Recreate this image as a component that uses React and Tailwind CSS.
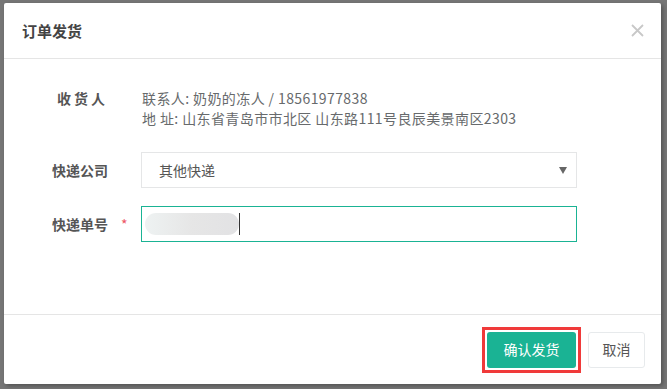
import React from 'react';

const font = { fontFamily: '"Noto Sans CJK SC", "Noto Sans", sans-serif' };

function FormRow({ label, required, children, className = '' }) {
  return (
    <div className={`flex items-center ${className}`}>
      <div className="w-[104px] text-right text-[14px] font-bold text-[#555]">{label}</div>
      <div className="w-[33px] pl-[13px] text-[14px] text-[#ed5565]">{required ? '*' : ''}</div>
      {children}
    </div>
  );
}

export default function App() {
  return (
    <div className="w-[667px] h-[389px] bg-[#767676] pt-[3px] pl-[4px] overflow-hidden" style={font}>
      <div className="w-[657px] h-[381px] bg-white rounded-[2px] flex flex-col shadow-[2px_2px_4px_rgba(0,0,0,0.3)]">
        {/* Header */}
        <div className="h-[56px] border-b border-[#e5e5e5] pl-[18px] pr-[17px] flex items-center justify-between">
          <h4 className="text-[15px] font-bold text-[#444] leading-none">订单发货</h4>
          <svg width="13" height="13" viewBox="0 0 13 13">
            <path d="M1 1 L12 12 M12 1 L1 12" stroke="#c8c8c8" strokeWidth="1.8" />
          </svg>
        </div>

        {/* Body */}
        <div className="flex-1 pt-[29px]">
          <div className="flex">
            <div className="w-[104px] text-right text-[14px] font-bold text-[#555] leading-[20px] tracking-[3px]">收货人</div>
            <div className="pl-[34px] text-[14px] text-[#676a6c] leading-[20px] tracking-[0.4px]">
              <div>联系人: 奶奶的冻人 / 18561977838</div>
              <div>地 址: 山东省青岛市市北区 山东路111号良辰美景南区2303</div>
            </div>
          </div>

          <FormRow label="快递公司" className="mt-[24px]">
            <div className="w-[436px] h-[36px] border border-[#e5e6e7] flex items-center justify-between pl-[17px] pr-[9px] text-[14px] text-[#555]">
              <span>其他快递</span>
              <svg width="8" height="7" viewBox="0 0 8 7">
                <path d="M0 0 H8 L4 7 Z" fill="#666" />
              </svg>
            </div>
          </FormRow>

          <FormRow label="快递单号" required className="mt-[18px]">
            <div className="w-[436px] h-[36px] border border-[#1ab394] flex items-center pl-[3px]">
              <div className="w-[94px] h-[22px] rounded-full bg-gradient-to-r from-[#eef2f2] via-[#e6e6e6] to-[#e2e2e4]" />
              <div className="w-[1px] h-[22px] bg-[#333]" />
            </div>
          </FormRow>
        </div>

        {/* Footer */}
        <div className="h-[70px] border-t border-[#e5e5e5] flex items-center justify-end gap-[7px] pr-[16px]">
          <div className="border-[3px] border-[#f03a3a] p-[2px]">
            <button className="w-[89px] h-[36px] rounded-[3px] bg-[#1ab394] text-white text-[14px] block">
              确认发货
            </button>
          </div>
          <button className="w-[57px] h-[36px] rounded-[3px] border border-[#e7eaec] bg-white text-[#555] text-[14px]">
            取消
          </button>
        </div>
      </div>
    </div>
  );
}
